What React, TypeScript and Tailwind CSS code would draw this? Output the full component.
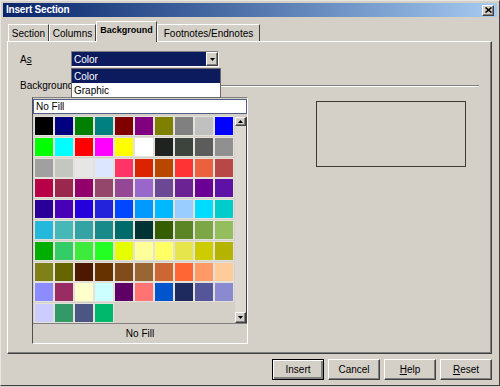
import React from 'react';

const palette: string[] = [
  '#000000', '#000080', '#008000', '#008080', '#800000', '#800080', '#808000', '#808080', '#c0c0c0', '#0000ff',
  '#00ff00', '#00ffff', '#ff0000', '#ff00ff', '#ffff00', '#ffffff', '#1e231f', '#3d443e', '#5c5c5c', '#909090',
  '#a0a0a0', '#c4c6c2', '#e6e6e6', '#dde6ff', '#ff3366', '#dc2300', '#b84700', '#ff3333', '#eb613d', '#b84747',
  '#b80047', '#99284c', '#94006b', '#94476b', '#944794', '#9966cc', '#6b4794', '#6b2394', '#6b0094', '#5e11a6',
  '#280099', '#4700b8', '#2300dc', '#2323dc', '#0047ff', '#0099ff', '#00b8ff', '#99ccff', '#00dcff', '#00cccc',
  '#23b8dc', '#47b8b8', '#33a3a3', '#198a8a', '#006b6b', '#003333', '#355e00', '#5c8526', '#7da647', '#94bd5e',
  '#00ae00', '#33cc66', '#3deb3d', '#23ff23', '#e6ff00', '#ffff99', '#ffff66', '#e6e64c', '#cccc00', '#b3b300',
  '#808019', '#666600', '#4c1900', '#663300', '#804c19', '#996633', '#cc6633', '#ff6633', '#ff9966', '#ffcc99',
  '#8c8cff', '#992d63', '#ffffcc', '#ccffff', '#5e0066', '#ff7373', '#0055cc', '#1e2a5e', '#555599', '#8a8ad1',
  '#ccccff', '#339966', '#4b5683', '#00b86b',
];

const tabs = [
  { label: 'Section', w: 'w-[41px]' },
  { label: 'Columns', w: 'w-[47px]' },
  { label: 'Background', w: 'w-[61px]', active: true },
  { label: 'Footnotes/Endnotes', w: 'w-[103px]' },
];

const raised =
  'border border-t-white border-l-white border-r-[#404040] border-b-[#404040] shadow-[inset_-1px_-1px_0_#808080]';

const Button: React.FC<{ children: React.ReactNode; primary?: boolean }> = ({ children, primary }) => (
  <div
    className={
      'flex h-[21px] w-[52px] items-center justify-center bg-[#d4d0c8] text-[10px] text-black ' +
      (primary
        ? 'border border-black shadow-[inset_1px_1px_0_#ffffff,inset_-2px_-2px_0_#808080]'
        : raised)
    }
  >
    {children}
  </div>
);

export default function App() {
  return (
    <div className="h-[387px] w-[500px] overflow-hidden bg-[#d4d0c8] font-['Liberation_Sans',Arial,sans-serif] text-black">
      <div className="flex h-[386px] flex-col border border-t-[#e8e6e1] border-l-[#e8e6e1] border-r-[#404040] border-b-[#404040] px-[2px] pt-[2px]">
        {/* title bar */}
        <div className="flex h-[14px] items-center justify-between bg-gradient-to-r from-[#0a246a] to-[#a6caf0] pl-[3px] pr-[3px]">
          <span className="text-[10px] font-bold leading-none tracking-[-0.2px] text-white">Insert Section</span>
          <div className={'flex h-[11px] w-[12px] items-center justify-center bg-[#d4d0c8] ' + raised}>
            <svg width="7" height="6" viewBox="0 0 7 6">
              <path d="M0.5 0.5 L6.5 5.5 M6.5 0.5 L0.5 5.5" stroke="#000" strokeWidth="1.6" />
            </svg>
          </div>
        </div>

        {/* tabs */}
        <div className="mt-[3px] flex h-[21px] items-end pl-[5px]">
          {tabs.map((t) =>
            t.active ? (
              <div
                key={t.label}
                className={
                  'relative z-10 -mb-px flex h-[21px] items-center justify-center border-l border-t border-r border-l-white border-t-white border-r-[#404040] bg-[#d4d0c8] pb-[2px] text-[9px] font-bold ' +
                  t.w
                }
              >
                {t.label}
              </div>
            ) : (
              <div
                key={t.label}
                className={
                  'flex h-[17px] items-center justify-center border-l border-t border-r border-l-white border-t-white border-r-[#404040] text-[10px] ' +
                  t.w
                }
              >
                {t.label}
              </div>
            )
          )}
        </div>

        {/* panel */}
        <div className={'ml-[4px] flex h-[313px] w-[485px] flex-col pl-[12px] pt-[9px] ' + raised}>
          <div className="flex h-[16px] items-center">
            <span className="w-[51px] text-[10px]">
              A<span className="underline">s</span>
            </span>
            <div className="relative flex h-[16px] w-[148px] border border-t-[#808080] border-l-[#808080] border-r-white border-b-white">
              <div className="flex flex-1 items-center bg-[#0c1a5e] pl-[2px] text-[10px] text-white">Color</div>
              <div className={'flex w-[12px] items-center justify-center bg-[#d4d0c8] ' + raised}>
                <svg width="5" height="3" viewBox="0 0 5 3">
                  <path d="M0 0 H5 L2.5 3 Z" fill="#000" />
                </svg>
              </div>
              <div className="absolute left-[-1px] top-[16px] z-20 flex w-[150px] flex-col border border-[#6b6b6b] bg-white text-[10px]">
                <div className="flex h-[14px] items-center bg-[#0c1a5e] pl-[2px] text-white">Color</div>
                <div className="flex h-[14px] items-center pl-[2px]">Graphic</div>
              </div>
            </div>
          </div>

          <div className="mt-[12px] flex h-[13px] items-center pr-[12px]">
            <span className="text-[10px]">Background</span>
            <div className="ml-[4px] h-[2px] flex-1 border-t border-b border-t-[#808080] border-b-white" />
          </div>

          <div className="mt-[5px] flex items-start">
            {/* colour set */}
            <div className="ml-[12px] flex h-[247px] w-[216px] flex-col border border-t-[#808080] border-l-[#505050] border-r-white border-b-white">
              <div className="mt-[1px] flex h-[15px] items-center border border-[#4f5f86] bg-white pl-[2px] text-[10px]">
                No Fill
              </div>
              <div className="flex h-[209px] pt-[3px]">
                <div className="grid grid-cols-[repeat(10,18px)] content-start gap-x-[2px] gap-y-[2.8px] pl-[2px]">
                  {palette.map((c, i) => (
                    <div key={i} className="h-[18px] w-[18px] shadow-[0_0_0_1px_#e4e1db]" style={{ backgroundColor: c }} />
                  ))}
                </div>
                <div className="ml-[2px] flex h-[206px] w-[12px] flex-col border-r border-r-[#404040] bg-[#ddd9d2]">
                  <div className={'flex h-[9px] items-center justify-center bg-[#d4d0c8] ' + raised}>
                    <svg width="5" height="3" viewBox="0 0 5 3">
                      <path d="M0 3 H5 L2.5 0 Z" fill="#000" />
                    </svg>
                  </div>
                  <div className="flex-1" />
                  <div className={'flex h-[11px] items-center justify-center bg-[#d4d0c8] ' + raised}>
                    <svg width="5" height="3" viewBox="0 0 5 3">
                      <path d="M0 0 H5 L2.5 3 Z" fill="#000" />
                    </svg>
                  </div>
                </div>
              </div>
              <div className="flex flex-1 items-center justify-center border-t border-t-[#808080] text-[10px]">
                No Fill
              </div>
            </div>

            {/* preview */}
            <div className="ml-[68px] mt-[4px] h-[66px] w-[150px] border border-[#3c3833] bg-[#d4d0c8]" />
          </div>
        </div>

        {/* buttons */}
        <div className="mt-[5px] flex justify-end gap-[4px] pr-[5px]">
          <Button primary>Insert</Button>
          <Button>Cancel</Button>
          <Button>
            <span className="underline">H</span>elp
          </Button>
          <Button>
            <span className="underline">R</span>eset
          </Button>
        </div>
      </div>
    </div>
  );
}
